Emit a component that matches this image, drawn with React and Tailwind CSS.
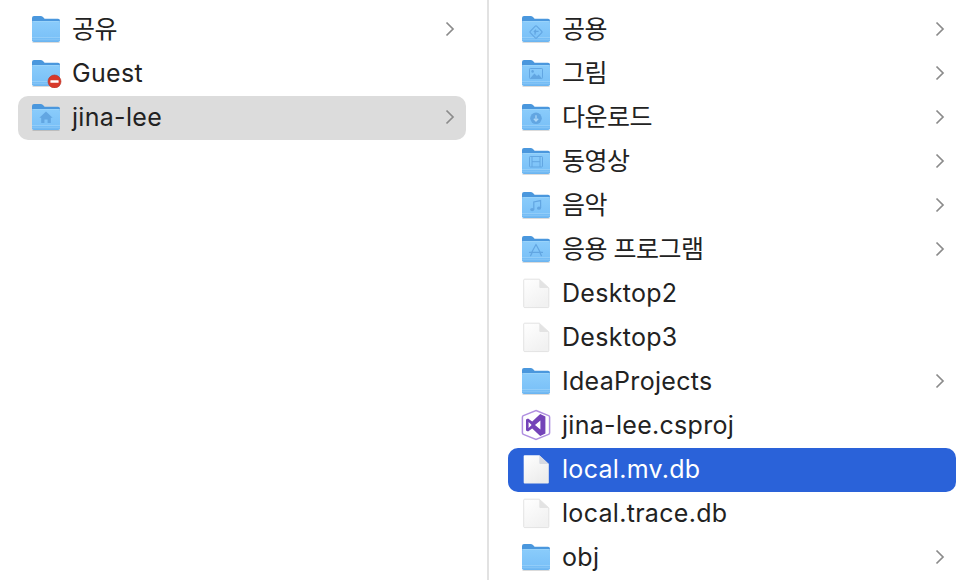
import { useId } from "react";

const leftItems = [
  { name: "공유", icon: "folder", arrow: true },
  { name: "Guest", icon: "folder", badge: true },
  { name: "jina-lee", icon: "home", arrow: true, state: "muted" },
];

const rightItems = [
  { name: "공용", icon: "public", arrow: true },
  { name: "그림", icon: "pictures", arrow: true },
  { name: "다운로드", icon: "downloads", arrow: true },
  { name: "동영상", icon: "movies", arrow: true },
  { name: "음악", icon: "music", arrow: true },
  { name: "응용 프로그램", icon: "apps", arrow: true },
  { name: "Desktop2", icon: "file" },
  { name: "Desktop3", icon: "file" },
  { name: "IdeaProjects", icon: "folder", arrow: true },
  { name: "jina-lee.csproj", icon: "vs" },
  { name: "local.mv.db", icon: "file", state: "active" },
  { name: "local.trace.db", icon: "file" },
  { name: "obj", icon: "folder", arrow: true },
];

const GLYPH = "#62a6e2";

function Glyph({ type }) {
  if (type === "home") {
    return (
      <path d="M16 9.5 L9.4 15.8 H11.2 V21 H14.4 V17.4 H17.6 V21 H20.8 V15.8 H22.6 Z" fill={GLYPH} />
    );
  }
  if (type === "public") {
    return (
      <g fill="none" stroke={GLYPH}>
        <rect x="11.4" y="13.4" width="9.2" height="9.2" rx="1" transform="rotate(45 16 18)" strokeWidth="1.1" />
        <path d="M18.6 17.4 H14.4 M16 15.6 L14.2 17.4 L16 19.2 M15 17.4 V20.8" strokeWidth="1.1" />
      </g>
    );
  }
  if (type === "pictures") {
    return (
      <g>
        <rect x="9.5" y="10.5" width="13" height="10" rx="0.8" fill="none" stroke={GLYPH} strokeWidth="1" />
        <circle cx="12.6" cy="13.4" r="1.3" fill={GLYPH} />
        <path d="M10.4 20 L14.4 15.6 L17 18 L18.6 16.6 L21.6 20 Z" fill={GLYPH} />
      </g>
    );
  }
  if (type === "downloads") {
    return (
      <g>
        <circle cx="16" cy="16.3" r="5.8" fill={GLYPH} />
        <path d="M16 13.2 V18.8 M13.8 16.8 L16 19 L18.2 16.8" fill="none" stroke="#a9d6f8" strokeWidth="1.3" />
      </g>
    );
  }
  if (type === "movies") {
    return (
      <g fill="none" stroke={GLYPH} strokeWidth="1">
        <rect x="9.5" y="10.5" width="13" height="10.5" rx="0.8" />
        <path d="M12 10.5 V21 M20 10.5 V21 M12 15.7 H20" />
      </g>
    );
  }
  if (type === "music") {
    return (
      <g>
        <path d="M13.8 19.5 V12 L20.6 10.6 V18" fill="none" stroke={GLYPH} strokeWidth="1.2" />
        <ellipse cx="12.2" cy="19.6" rx="2" ry="1.6" fill={GLYPH} />
        <ellipse cx="19" cy="18.2" rx="2" ry="1.6" fill={GLYPH} />
      </g>
    );
  }
  if (type === "apps") {
    return (
      <path
        d="M16 10.5 L11.4 19 M16 10.5 L20.6 19 M9.5 18.4 H22.5 M10.6 21.6 L11.8 19.4 M21.4 21.6 L20.2 19.4"
        fill="none"
        stroke={GLYPH}
        strokeWidth="1.2"
        strokeLinecap="round"
      />
    );
  }
  return null;
}

function FolderIcon({ type, badge }) {
  const id = useId();
  return (
    <svg width="32" height="30" viewBox="0 0 32 30" className="shrink-0">
      <defs>
        <linearGradient id={id} x1="0" y1="0" x2="0" y2="1">
          <stop offset="0" stopColor="#8accfb" />
          <stop offset="0.75" stopColor="#7cc2f8" />
          <stop offset="1" stopColor="#6ab4f0" />
        </linearGradient>
      </defs>
      <path d="M2 4 Q2 2 4 2 H10.5 Q12 2 13 3 L14.6 4.8 H28 Q30 4.8 30 6.8 V12 H2 Z" fill="#4a97dd" />
      <rect x="2" y="7" width="28" height="21" rx="1.8" fill={`url(#${id})`} />
      <rect x="2" y="7" width="28" height="0.8" fill="#a6d8fb" opacity="0.7" />
      <rect x="2" y="23" width="28" height="0.8" fill="#a6d8fb" opacity="0.7" />
      <rect x="2" y="25.4" width="28" height="0.8" fill="#a6d8fb" opacity="0.5" />
      <rect x="2.5" y="28" width="27" height="1" fill="#000" opacity="0.14" />
      <Glyph type={type} />
      {badge && (
        <g>
          <circle cx="24.5" cy="23.5" r="6.5" fill="#d8392b" stroke="#b92d20" strokeWidth="0.6" />
          <rect x="20.4" y="22.2" width="8.2" height="2.6" rx="0.4" fill="#fff" />
        </g>
      )}
    </svg>
  );
}

function FileIcon({ active }) {
  const id = useId();
  return (
    <svg width="32" height="32" viewBox="0 0 32 32" className="shrink-0">
      <defs>
        <linearGradient id={id} x1="0" y1="0" x2="0.6" y2="1">
          <stop offset="0" stopColor="#ffffff" />
          <stop offset="1" stopColor={active ? "#ececec" : "#f1f1f1"} />
        </linearGradient>
      </defs>
      <path
        d="M3.7 3 Q3.7 2.2 4.7 2.2 H19.3 L28.8 11 V29.6 Q28.8 30.6 27.8 30.6 H4.7 Q3.7 30.6 3.7 29.6 Z"
        fill={`url(#${id})`}
        stroke={active ? "none" : "#dcdcdc"}
        strokeWidth="0.8"
      />
      <path d="M19.3 2.2 V10 Q19.3 11 20.3 11 H28.8 Z" fill={active ? "#d6d9e2" : "#e3e3e3"} />
    </svg>
  );
}

function VsIcon() {
  return (
    <svg width="32" height="32" viewBox="0 0 32 32" className="shrink-0">
      <path
        d="M16 1.5 L28.6 6.6 Q29.6 7 29.6 8.2 V23.8 Q29.6 25 28.6 25.4 L16 30.5 L3.4 25.4 Q2.4 25 2.4 23.8 V8.2 Q2.4 7 3.4 6.6 Z"
        fill="#fff"
        stroke="#b08fe0"
        strokeWidth="1.5"
      />
      <path
        d="M20.2 5 L25.4 7.6 V24.4 L20.2 27 L12.2 19.4 L8 22.6 L6 21.4 V10.6 L8 9.4 L12.2 12.6 Z M20.4 11.6 L15 16 L20.4 20.4 Z M8.6 13 V19 L11.6 16 Z"
        fill="#7443b8"
        fillRule="evenodd"
      />
    </svg>
  );
}

function ItemIcon({ item }) {
  if (item.icon === "file") return <FileIcon active={item.state === "active"} />;
  if (item.icon === "vs") return <VsIcon />;
  return <FolderIcon type={item.icon} badge={item.badge} />;
}

function Chevron() {
  return (
    <svg width="10" height="16" viewBox="0 0 10 16" className="shrink-0">
      <path d="M1.5 1.5 L8 8 L1.5 14.5" fill="none" stroke="#8b8b8b" strokeWidth="1.7" />
    </svg>
  );
}

function Row({ item }) {
  const bg =
    item.state === "active"
      ? "bg-[#2a62d9] text-white"
      : item.state === "muted"
        ? "bg-[#dcdcdc] text-[#222222]"
        : "text-[#222222]";
  // hangul runs a bit narrower than the latin names in the reference
  const tracking = /[가-힣]/.test(item.name) ? "tracking-[-0.5px]" : "tracking-[0.3px]";
  return (
    <div className={`flex h-11 items-center rounded-[10px] pb-0.5 pl-3 pr-[11px] ${bg}`}>
      <div className="flex w-[42px] shrink-0 items-center">
        <ItemIcon item={item} />
      </div>
      <span className={`flex-1 whitespace-nowrap text-[25px] leading-none ${tracking}`}>{item.name}</span>
      {item.arrow && <Chevron />}
    </div>
  );
}

export default function App() {
  return (
    <div className="flex h-[580px] w-[970px] overflow-hidden bg-white font-['Inter','Noto_Sans_CJK_KR',sans-serif]">
      <div className="w-[487px] shrink-0 pt-2 pl-[18px] pr-[21px]">
        {leftItems.map((item) => (
          <Row key={item.name} item={item} />
        ))}
      </div>
      <div className="w-0.5 shrink-0 bg-[#e2e2e2]" />
      <div className="flex-1 pt-2 pl-[19px] pr-3.5">
        {rightItems.map((item) => (
          <Row key={item.name} item={item} />
        ))}
      </div>
    </div>
  );
}
